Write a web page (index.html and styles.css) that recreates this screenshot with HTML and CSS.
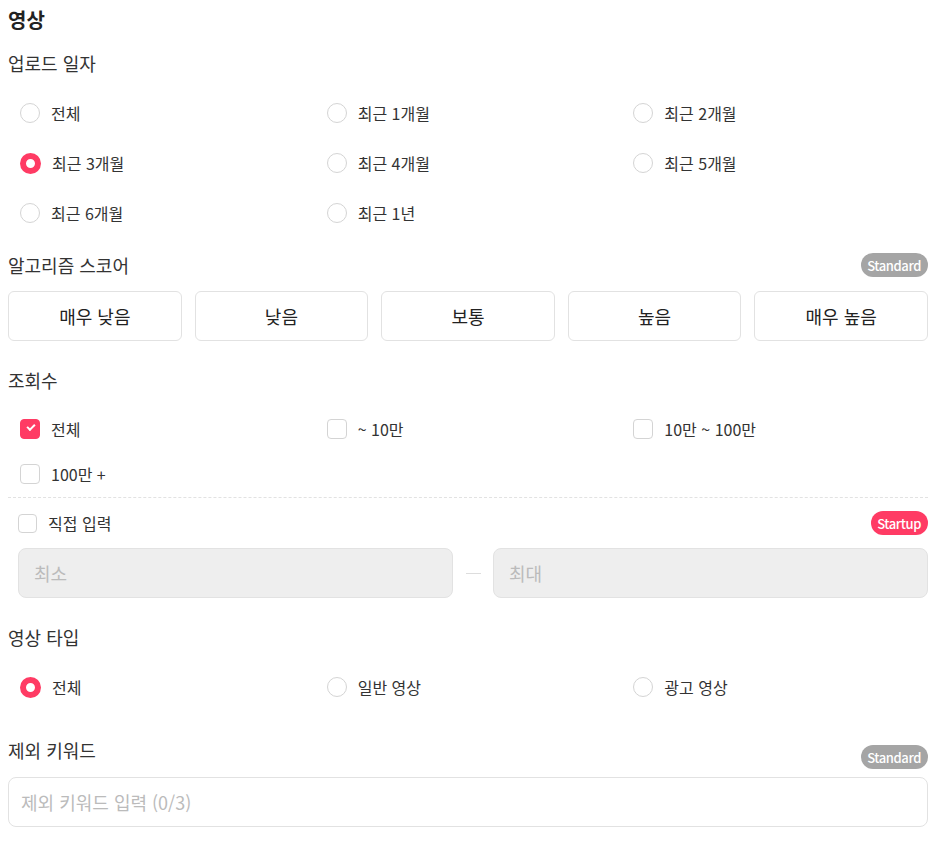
FILE: index.html
```html
<!DOCTYPE html>
<html lang="ko">
<head>
    <meta charset="UTF-8">
    <meta name="viewport" content="width=device-width, initial-scale=1.0">
    <title>영상 필터</title>
    <link rel="stylesheet" href="styles.css">
</head>
<body>
    <div class="panel">
        <h1 class="title">영상</h1>

        <!-- 업로드 일자 -->
        <div class="head"><span>업로드 일자</span></div>
        <div class="options">
            <label class="opt"><span class="radio"></span>전체</label>
            <label class="opt"><span class="radio"></span>최근 1개월</label>
            <label class="opt"><span class="radio"></span>최근 2개월</label>
            <label class="opt"><span class="radio on"></span>최근 3개월</label>
            <label class="opt"><span class="radio"></span>최근 4개월</label>
            <label class="opt"><span class="radio"></span>최근 5개월</label>
            <label class="opt"><span class="radio"></span>최근 6개월</label>
            <label class="opt"><span class="radio"></span>최근 1년</label>
        </div>

        <!-- 알고리즘 스코어 -->
        <div class="head head-score"><span>알고리즘 스코어</span><span class="badge">Standard</span></div>
        <div class="levels">
            <button class="level">매우 낮음</button>
            <button class="level">낮음</button>
            <button class="level">보통</button>
            <button class="level">높음</button>
            <button class="level">매우 높음</button>
        </div>

        <!-- 조회수 -->
        <div class="head head-views"><span>조회수</span></div>
        <div class="options checks">
            <label class="opt"><span class="box on"></span>전체</label>
            <label class="opt"><span class="box"></span>~ 10만</label>
            <label class="opt"><span class="box"></span>10만 ~ 100만</label>
            <label class="opt"><span class="box"></span>100만 +</label>
        </div>
        <div class="custom">
            <div class="custom-head">
                <label class="opt"><span class="box"></span>직접 입력</label>
                <span class="badge pink">Startup</span>
            </div>
            <div class="range">
                <input class="field" type="text" placeholder="최소" disabled>
                <span class="dash"></span>
                <input class="field" type="text" placeholder="최대" disabled>
            </div>
        </div>

        <!-- 영상 타입 -->
        <div class="head head-type"><span>영상 타입</span></div>
        <div class="options">
            <label class="opt"><span class="radio on"></span>전체</label>
            <label class="opt"><span class="radio"></span>일반 영상</label>
            <label class="opt"><span class="radio"></span>광고 영상</label>
        </div>

        <!-- 제외 키워드 -->
        <div class="head head-keyword"><span class="keyword-label">제외 키워드</span><span class="badge">Standard</span></div>
        <input class="keyword" type="text" placeholder="제외 키워드 입력 (0/3)">
    </div>
</body>
</html>
```

FILE: styles.css
```css
body {
    margin: 0;
    font-family: "Noto Sans CJK KR", "Noto Sans", sans-serif;
    color: #333;
    background: #fff;
}
.panel {
    width: 920px;
    padding: 8px 12px 16px 8px;
}
.title {
    margin: 0;
    font-size: 20px;
    line-height: 24px;
    font-weight: 700;
    color: #222;
}

/* section headings */
.head {
    display: flex;
    justify-content: space-between;
    align-items: center;
    height: 26px;
    font-size: 18px;
    margin-top: 18px;
}
.head-score {
    margin-top: 14px;
}
.head-views {
    margin-top: 26px;
}
.head-type {
    margin-top: 26px;
}
.head-keyword {
    margin-top: 31px;
    align-items: flex-end;
}
.keyword-label {
    line-height: 26px;
    margin-bottom: 6px;
}
.badge {
    display: inline-flex;
    align-items: center;
    height: 24px;
    padding: 0 7px 0 6px;
    border-radius: 12px;
    background: #a5a5a5;
    color: #fff;
    font-size: 13px;
    font-weight: 500;
    letter-spacing: -0.4px;
}
.badge.pink {
    background: #ff3b64;
}

/* radio and checkbox rows */
.options {
    display: grid;
    grid-template-columns: repeat(3, 1fr);
    margin-top: 12px;
}
.opt {
    display: flex;
    align-items: center;
    gap: 11px;
    height: 50px;
    padding-left: 12px;
    font-size: 16px;
    color: #333;
}
.checks {
    margin-top: 13px;
    padding-bottom: 1px;
    border-bottom: 1px dashed #e2e2e2;
}
.checks .opt {
    height: 45px;
}
.radio {
    width: 20px;
    height: 20px;
    box-sizing: border-box;
    border: 1px solid #d4d4d4;
    border-radius: 50%;
    flex: none;
}
.radio.on {
    border: 6px solid #ff3b64;
    width: 21px;
    height: 21px;
}
.box {
    width: 20px;
    height: 20px;
    box-sizing: border-box;
    border: 1px solid #d4d4d4;
    border-radius: 4px;
    flex: none;
    position: relative;
}
.box.on {
    background: #ff3b64;
    border-color: #ff3b64;
}
.box.on::after {
    content: "";
    position: absolute;
    left: 6px;
    top: 4px;
    width: 6px;
    height: 3px;
    border-left: 2px solid #fff;
    border-bottom: 2px solid #fff;
    transform: rotate(-45deg);
}

/* score buttons */
.levels {
    display: flex;
    gap: 13px;
    margin-top: 13px;
}
.level {
    flex: 1;
    height: 50px;
    border: 1px solid #e2e2e2;
    border-radius: 6px;
    background: #fff;
    font-family: inherit;
    font-size: 18px;
    color: #222;
}

/* custom range */
.custom {
    padding-left: 10px;
}
.custom-head {
    display: flex;
    justify-content: space-between;
    align-items: center;
    margin-top: 13px;
}
.custom-head .opt {
    height: 24px;
    padding-left: 0;
}
.custom-head .box {
    width: 19px;
    height: 19px;
}
.range {
    display: flex;
    align-items: center;
    margin-top: 13px;
}
.field {
    flex: 1;
    min-width: 0;
    height: 50px;
    box-sizing: border-box;
    padding: 0 15px;
    border: 1px solid #e2e2e2;
    border-radius: 8px;
    background: #eeeeee;
    font-family: inherit;
    font-size: 18px;
}
.field::placeholder {
    color: #bbb;
}
.dash {
    width: 15px;
    height: 1px;
    background: #ddd;
    margin: 0 12px 0 13px;
}

/* keyword */
.keyword {
    display: block;
    width: 100%;
    height: 50px;
    box-sizing: border-box;
    margin-top: 8px;
    padding: 0 12px;
    border: 1px solid #e2e2e2;
    border-radius: 8px;
    font-family: inherit;
    font-size: 18px;
    color: #333;
}
.keyword::placeholder {
    color: #bbb;
}
```
